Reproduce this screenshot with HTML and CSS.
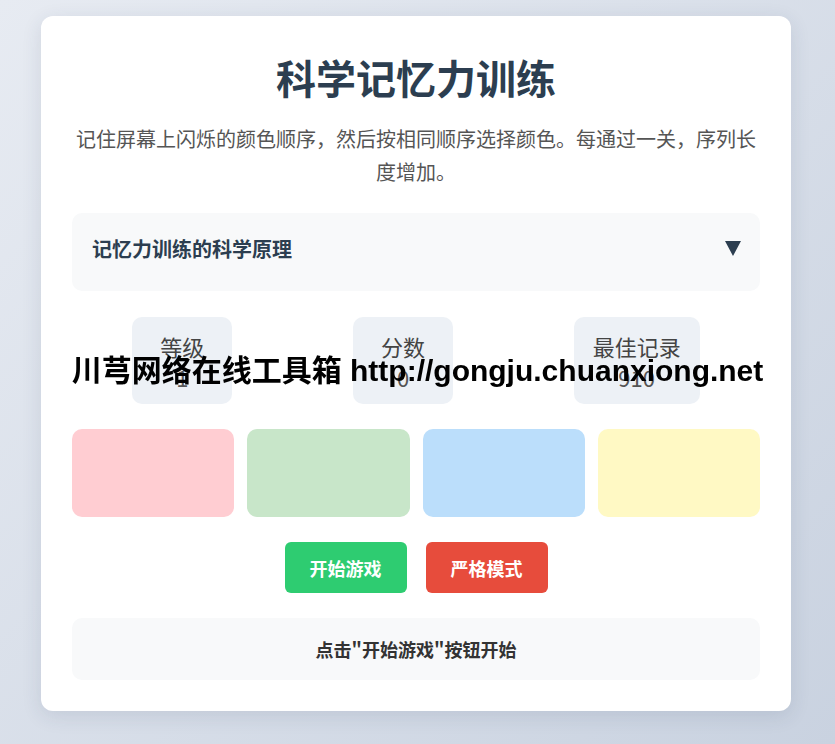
FILE: index.html
```html
<!DOCTYPE html>
<html lang="zh-CN">
<head>
<meta charset="utf-8">
<title>科学记忆力训练</title>
<link rel="stylesheet" href="styles.css">
</head>
<body>
<div class="card">
  <h1 class="title">科学记忆力训练</h1>
  <p class="desc">记住屏幕上闪烁的颜色顺序，然后按相同顺序选择颜色。每通过一关，序列长度增加。</p>
  <details class="science">
    <summary class="science-summary"><span>记忆力训练的科学原理</span><span class="arrow"></span></summary>
  </details>
  <div class="stats">
    <div class="stat"><div class="stat-label">等级</div><div class="stat-value">1</div></div>
    <div class="stat"><div class="stat-label">分数</div><div class="stat-value">0</div></div>
    <div class="stat"><div class="stat-label">最佳记录</div><div class="stat-value">910</div></div>
  </div>
  <div class="pads">
    <div class="pad pad-red"></div>
    <div class="pad pad-green"></div>
    <div class="pad pad-blue"></div>
    <div class="pad pad-yellow"></div>
  </div>
  <div class="controls">
    <button class="btn btn-start">开始游戏</button>
    <button class="btn btn-strict">严格模式</button>
  </div>
  <div class="status">点击"开始游戏"按钮开始</div>
</div>
<div class="watermark">川芎网络在线工具箱 http://gongju.chuanxiong.net</div>
</body>
</html>
```
FILE: styles.css
```css
* { box-sizing: border-box; }
html, body { margin: 0; }
body {
  min-height: 100vh;
  padding: 16px 3px 25px 0;
  background: linear-gradient(135deg, #e7ebf2 0%, #c9d2e0 100%);
  font-family: "Noto Sans CJK SC", "Noto Sans", sans-serif;
  color: #333;
}
.card {
  width: 750px;
  margin: 0 auto;
  background: #fff;
  border-radius: 12px;
  box-shadow: 0 5px 20px rgba(40, 60, 90, 0.12);
  padding: 31px;
}
.title {
  margin: 0;
  padding-top: 1px;
  text-align: center;
  font-size: 40px;
  line-height: 58px;
  font-weight: 700;
  color: #2c3e50;
}
.desc {
  margin: 16px 0 0;
  text-align: center;
  font-size: 20px;
  line-height: 33px;
  color: #555;
}
.science {
  margin-top: 25px;
  background: #f8f9fa;
  border-radius: 10px;
}
.science-summary {
  list-style: none;
  display: flex;
  align-items: center;
  justify-content: space-between;
  height: 78px;
  padding: 0 19px 8px 20px;
  font-size: 20px;
  font-weight: 700;
  color: #2c3e50;
  cursor: pointer;
}
.science-summary::-webkit-details-marker { display: none; }
.arrow {
  width: 0;
  height: 0;
  border-left: 8px solid transparent;
  border-right: 8px solid transparent;
  border-top: 15px solid #2c3e50;
}
.stats {
  display: flex;
  justify-content: space-around;
  margin-top: 26px;
}
.stat {
  min-width: 100px;
  padding: 14px 19px 11px;
  background: #edf1f6;
  border-radius: 10px;
  text-align: center;
  font-size: 22px;
  line-height: 31px;
}
.stat-label { color: #444; }
.stat-value { color: #555; }
.pads {
  display: grid;
  grid-template-columns: repeat(4, 1fr);
  gap: 13px;
  margin-top: 25px;
}
.pad {
  height: 88px;
  border-radius: 10px;
}
.pad-red { background: #ffcdd2; }
.pad-green { background: #c8e6c9; }
.pad-blue { background: #bbdefb; }
.pad-yellow { background: #fff9c4; }
.controls {
  display: flex;
  justify-content: center;
  gap: 19px;
  margin-top: 25px;
}
.btn {
  width: 122px;
  height: 51px;
  border: none;
  border-radius: 6px;
  color: #fff;
  font-family: "Noto Sans CJK SC", "Noto Sans", sans-serif;
  font-size: 18px;
  font-weight: 700;
  cursor: pointer;
}
.btn-start { background: #2ecc71; }
.btn-strict { background: #e74c3c; }
.status {
  margin-top: 25px;
  height: 62px;
  display: flex;
  align-items: center;
  justify-content: center;
  background: #f8f9fa;
  border-radius: 10px;
  font-size: 18px;
  font-weight: 700;
  color: #333;
}
.watermark {
  position: fixed;
  left: 50%;
  top: calc(50% - 4px);
  transform: translate(-50%, -50%);
  white-space: nowrap;
  font-family: "Liberation Sans", "Noto Sans CJK SC", sans-serif;
  font-size: 30px;
  font-weight: 700;
  color: #000;
  pointer-events: none;
}
```
